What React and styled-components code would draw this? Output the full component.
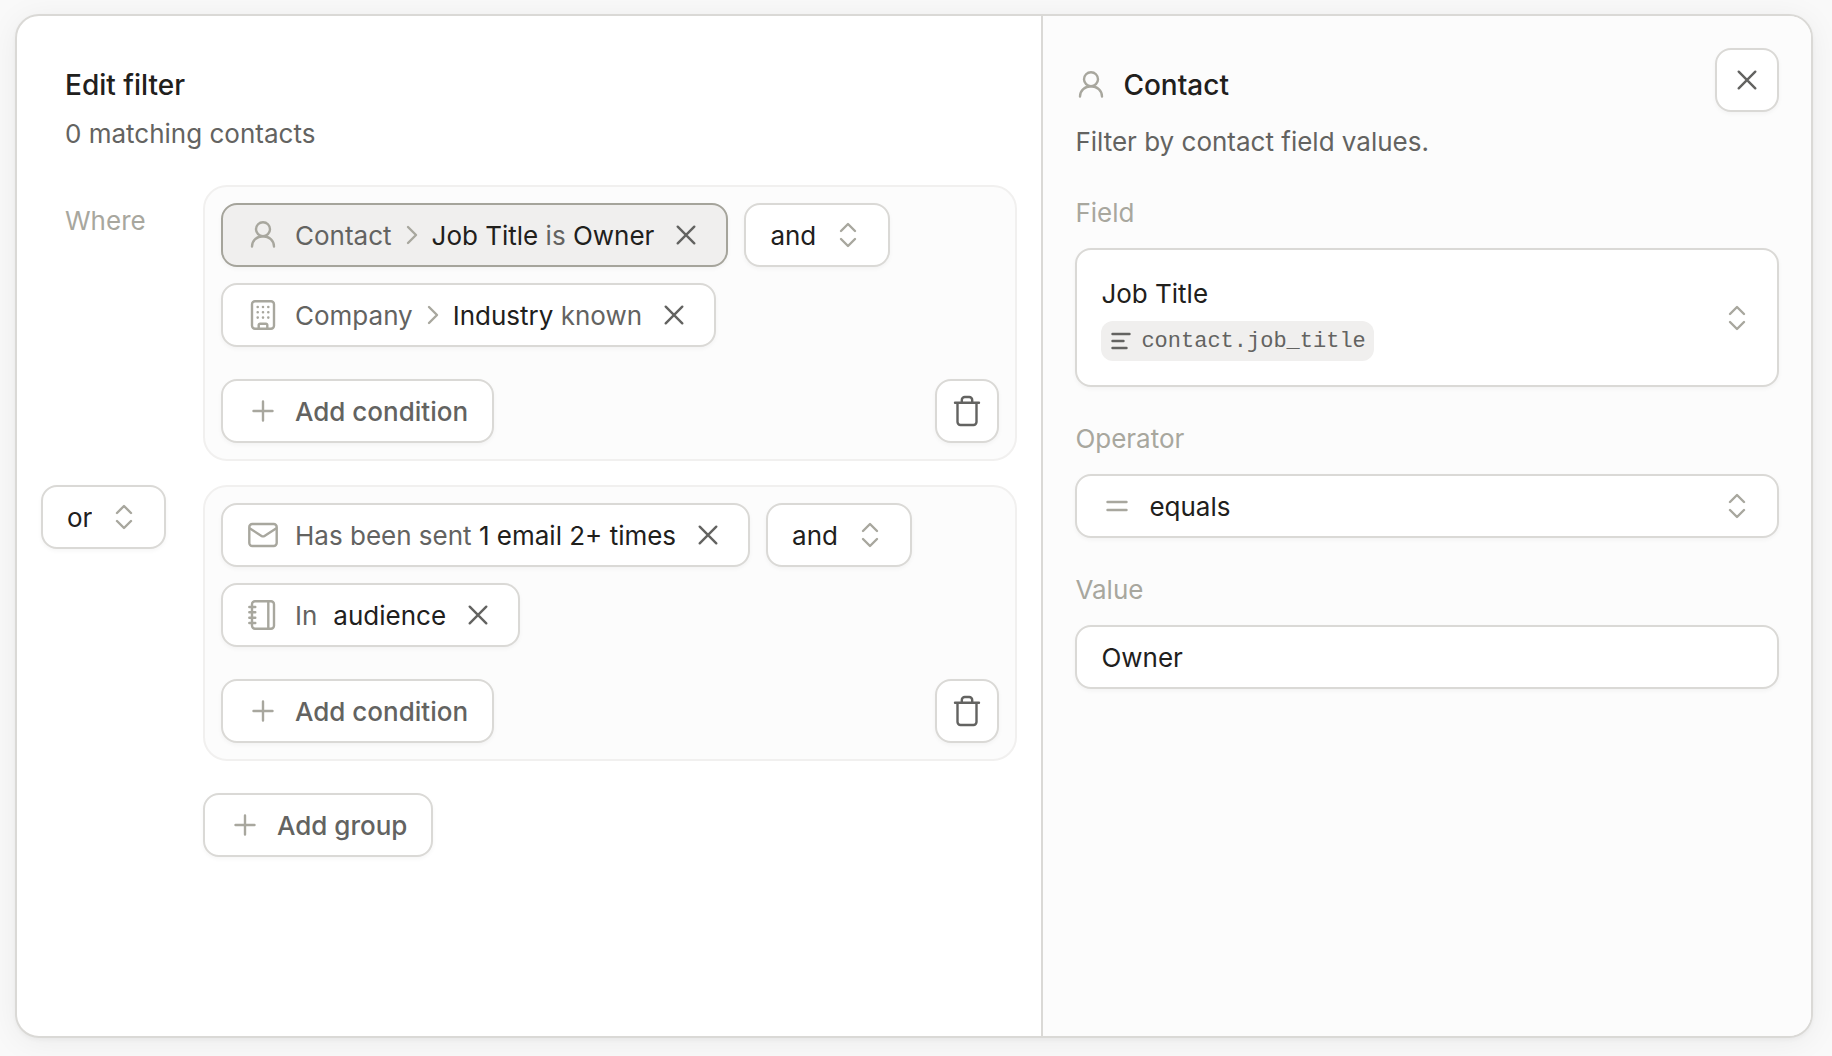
import { useState } from "react";
import styled, { createGlobalStyle } from "styled-components";

const GlobalStyle = createGlobalStyle`
  *, *::before, *::after {
    box-sizing: border-box;
  }

  body {
    margin: 0;
    background: #f9f9f9;
    color: #21201c;
    font-family: Inter, "Liberation Sans", sans-serif;
    font-size: 26px;
    line-height: 39px;
    -webkit-font-smoothing: antialiased;
  }

  button, input, select {
    margin: 0;
    font: inherit;
    color: inherit;
  }
`;

const Page = styled.main`
  display: flex;
  min-height: 100vh;
  padding: 14px 19px 18px 15px;
`;

const Dialog = styled.div`
  flex: 1;
  display: grid;
  grid-template-columns: 1fr 42.9%;
  border: 2px solid #dad9d6;
  border-radius: 24px;
  background: #ffffff;
  overflow: hidden;
  box-shadow: 0 2px 4px rgba(0, 0, 0, 0.04), 0 4px 32px rgba(0, 0, 0, 0.06);
`;

const FilterPane = styled.section`
  padding: 48px 24px 24px;
`;

const FilterHeader = styled.header`
  display: flex;
  flex-direction: column;
  gap: 8px;
  padding: 0 24px;
  margin-bottom: 32px;
`;

const Title = styled.h2`
  margin: 0;
  font-size: 28px;
  line-height: 42px;
  font-weight: 500;
`;

const Muted = styled.p`
  margin: 0;
  color: #636361;
`;

const Groups = styled.div`
  display: grid;
  grid-template-columns: 138px 1fr;
  align-items: start;
  gap: 24px;
`;

const Where = styled.span`
  padding: 16px 24px;
  color: #a8a79e;
`;

const Group = styled.div`
  display: flex;
  flex-direction: column;
  gap: 32px;
  padding: 16px;
  border: 2px solid #f1f0ef;
  border-radius: 24px;
  background: #fcfcfc;
`;

const Conditions = styled.div`
  display: flex;
  flex-direction: column;
  gap: 16px;
`;

const ConditionRow = styled.div`
  display: flex;
  flex-wrap: wrap;
  gap: 16px;
`;

const GroupFooter = styled.div`
  display: flex;
  justify-content: space-between;
`;

const Chip = styled.div`
  display: flex;
  align-items: center;
  gap: 16px;
  height: 64px;
  padding: 0 24px;
  border: 2px solid ${({ $active }) => ($active ? "#a5a49b" : "#dad9d6")};
  border-radius: 16px;
  background: ${({ $active }) => ($active ? "#f0efee" : "#ffffff")};
  box-shadow: 0 2px 4px rgba(0, 0, 0, 0.04);
  white-space: nowrap;
`;

const ChipText = styled.span`
  display: flex;
  align-items: center;
  gap: 8px;
  color: #636361;

  strong {
    color: #21201c;
    font-weight: 400;
  }
`;

const ChipRemove = styled.button`
  display: flex;
  padding: 0;
  border: 0;
  background: none;
  color: #636361;
  cursor: pointer;
`;

const Button = styled.button`
  display: inline-flex;
  align-items: center;
  gap: 16px;
  height: 64px;
  padding: 0 24px;
  border: 2px solid #dad9d6;
  border-radius: 16px;
  background: #ffffff;
  box-shadow: 0 2px 4px rgba(0, 0, 0, 0.04);
  color: #636361;
  font-weight: 500;
  white-space: nowrap;
  cursor: pointer;
`;

const IconButton = styled(Button)`
  flex: none;
  justify-content: center;
  width: 64px;
  padding: 0;
`;

const AddGroup = styled.div`
  grid-column: 2;
  margin-top: 8px;
`;

/* The select fills the box, its icons share the same grid cell. */
const SelectBox = styled.span`
  display: ${({ $block }) => ($block ? "grid" : "inline-grid")};
  align-items: center;
  justify-self: start;

  & > * {
    grid-area: 1 / 1;
  }

  & > svg {
    margin: 0 26px;
    pointer-events: none;
  }

  & > svg:last-child {
    justify-self: end;
  }
`;

const SelectInput = styled.select`
  appearance: none;
  field-sizing: content;
  height: 64px;
  padding: 0 72px 0 ${({ $leading }) => ($leading ? 72 : 24)}px;
  border: 2px solid #dad9d6;
  border-radius: 16px;
  background: #ffffff;
  box-shadow: 0 2px 4px rgba(0, 0, 0, 0.04);
  cursor: pointer;
`;

const DetailPane = styled.aside`
  display: flex;
  flex-direction: column;
  gap: 32px;
  padding: 32px;
  border-left: 2px solid #dad9d6;
  background: #fcfcfc;
`;

const DetailHeader = styled.header`
  display: flex;
  justify-content: space-between;
  align-items: flex-start;
`;

const DetailHeading = styled.div`
  display: flex;
  flex-direction: column;
  gap: 16px;
  padding-top: 16px;
`;

const DetailTitle = styled.div`
  display: flex;
  align-items: center;
  gap: 16px;
`;

const Field = styled.div`
  display: flex;
  flex-direction: column;
  gap: 16px;

  ${SelectBox} {
    justify-self: stretch;
  }
`;

const Label = styled.label`
  color: #a8a79e;
`;

const FieldButton = styled.button`
  display: flex;
  align-items: center;
  justify-content: space-between;
  padding: 24px;
  border: 2px solid #dad9d6;
  border-radius: 16px;
  background: #ffffff;
  box-shadow: 0 2px 4px rgba(0, 0, 0, 0.04);
  text-align: left;
  cursor: pointer;
`;

const FieldValue = styled.span`
  display: flex;
  flex-direction: column;
  align-items: flex-start;
  gap: 8px;
`;

const Code = styled.code`
  display: flex;
  align-items: center;
  gap: 8px;
  height: 40px;
  padding: 0 8px;
  border-radius: 12px;
  background: #f0efee;
  color: #636361;
  font-family: "Liberation Mono", monospace;
  font-size: 22px;
`;

const TextInput = styled.input`
  width: 100%;
  height: 64px;
  padding: 0 24px;
  border: 2px solid #dad9d6;
  border-radius: 16px;
  background: #ffffff;
  box-shadow: 0 2px 4px rgba(0, 0, 0, 0.04);
`;

const Svg = styled.svg`
  flex: none;
  fill: none;
  stroke: ${({ $tone }) => ($tone === "dark" ? "#636361" : "#a8a79e")};
  stroke-width: 2.4;
  stroke-linecap: round;
  stroke-linejoin: round;
`;

function Icon({ size = 32, tone, children }) {
  return (
    <Svg width={size} height={size} viewBox={`0 0 ${size} ${size}`} $tone={tone} aria-hidden="true">
      {children}
    </Svg>
  );
}

const UserIcon = () => (
  <Icon>
    <circle cx="16" cy="10.2" r="7" />
    <path d="M5 27.5C5 21.6 9.900 17.200 16 17.200s11 4.400 11 10.300" />
  </Icon>
);

const BuildingIcon = () => (
  <Icon>
    <rect x="5" y="2.300" width="22" height="27.400" rx="3" />
    <path d="M11.700 29.700V26a1.300 1.300 0 0 1 1.300-1.300h6a1.300 1.300 0 0 1 1.300 1.300v3.700" />
    <path strokeWidth="2.600" d="M10.700 8h0M16 8h0M21.300 8h0M10.700 13.300h0M16 13.300h0M21.300 13.300h0M10.700 18.600h0M16 18.600h0M21.300 18.600h0" />
  </Icon>
);

const MailIcon = () => (
  <Icon>
    <rect x="2.300" y="5" width="27.400" height="22" rx="3" />
    <path d="M3 9.500l11.500 7.400a2.800 2.800 0 0 0 3 0L29 9.500" />
  </Icon>
);

const NotebookIcon = () => (
  <Icon>
    <rect x="5" y="2.300" width="22" height="27.400" rx="3" />
    <path d="M21.300 2.300v27.400M2.300 8h6M2.300 13.300h6M2.300 18.700h6M2.300 24h6" />
  </Icon>
);

const ChevronIcon = () => (
  <Icon size={24}>
    <path d="M8 4l8 8-8 8" />
  </Icon>
);

const UpDownIcon = () => (
  <Icon>
    <path d="M9 12l7-7 7 7M9 20l7 7 7-7" />
  </Icon>
);

const CloseIcon = () => (
  <Icon tone="dark">
    <path d="M7.700 7.700l16.600 16.600M24.300 7.700L7.700 24.300" />
  </Icon>
);

const PlusIcon = () => (
  <Icon>
    <path d="M16 6.500v19M6.500 16h19" />
  </Icon>
);

const TrashIcon = () => (
  <Icon tone="dark">
    <path d="M4 7.700h24M6.500 7.700V27a3 3 0 0 0 3 3h13a3 3 0 0 0 3-3V7.700M10.800 7.500V5a3 3 0 0 1 3-3h4.400a3 3 0 0 1 3 3v2.500" />
  </Icon>
);

const EqualsIcon = () => (
  <Icon>
    <path d="M6.500 12h19M6.500 20h19" />
  </Icon>
);

const TextIcon = () => (
  <Icon size={24} tone="dark">
    <path d="M3.500 5h17M3.500 12h11M3.500 19h14" />
  </Icon>
);

function Condition({ icon, active, name, children }) {
  return (
    <Chip $active={active}>
      {icon}
      {children}
      <ChipRemove type="button" aria-label={`Remove ${name}`}>
        <CloseIcon />
      </ChipRemove>
    </Chip>
  );
}

function Joiner({ initial, label }) {
  const [value, setValue] = useState(initial);
  return (
    <SelectBox>
      <SelectInput aria-label={label} value={value} onChange={(e) => setValue(e.target.value)}>
        <option>and</option>
        <option>or</option>
      </SelectInput>
      <UpDownIcon />
    </SelectBox>
  );
}

function ConditionGroup({ children }) {
  return (
    <Group>
      <Conditions>{children}</Conditions>
      <GroupFooter>
        <Button type="button">
          <PlusIcon />
          Add condition
        </Button>
        <IconButton type="button" aria-label="Delete group">
          <TrashIcon />
        </IconButton>
      </GroupFooter>
    </Group>
  );
}

export default function App() {
  const [operator, setOperator] = useState("equals");
  const [value, setValue] = useState("Owner");

  return (
    <>
      <GlobalStyle />
      <Page>
        <Dialog role="dialog" aria-label="Edit filter">
          <FilterPane>
            <FilterHeader>
              <Title>Edit filter</Title>
              <Muted>0 matching contacts</Muted>
            </FilterHeader>
            <Groups>
              <Where>Where</Where>
              <ConditionGroup>
                <ConditionRow>
                  <Condition icon={<UserIcon />} name="job title" active>
                    <ChipText>
                      Contact
                      <ChevronIcon />
                      <span>
                        <strong>Job Title</strong> is <strong>Owner</strong>
                      </span>
                    </ChipText>
                  </Condition>
                  <Joiner initial="and" label="Match conditions" />
                </ConditionRow>
                <ConditionRow>
                  <Condition icon={<BuildingIcon />} name="industry">
                    <ChipText>
                      Company
                      <ChevronIcon />
                      <span>
                        <strong>Industry</strong> known
                      </span>
                    </ChipText>
                  </Condition>
                </ConditionRow>
              </ConditionGroup>

              <Joiner initial="or" label="Match groups" />
              <ConditionGroup>
                <ConditionRow>
                  <Condition icon={<MailIcon />} name="email">
                    <ChipText>
                      <span>
                        Has been sent <strong>1 email 2+ times</strong>
                      </span>
                    </ChipText>
                  </Condition>
                  <Joiner initial="and" label="Match conditions" />
                </ConditionRow>
                <ConditionRow>
                  <Condition icon={<NotebookIcon />} name="audience">
                    <ChipText>In</ChipText>
                    <ChipText>
                      <strong>audience</strong>
                    </ChipText>
                  </Condition>
                </ConditionRow>
              </ConditionGroup>

              <AddGroup>
                <Button type="button">
                  <PlusIcon />
                  Add group
                </Button>
              </AddGroup>
            </Groups>
          </FilterPane>

          <DetailPane>
            <DetailHeader>
              <DetailHeading>
                <DetailTitle>
                  <UserIcon />
                  <Title>Contact</Title>
                </DetailTitle>
                <Muted>Filter by contact field values.</Muted>
              </DetailHeading>
              <IconButton type="button" aria-label="Close">
                <CloseIcon />
              </IconButton>
            </DetailHeader>

            <Field>
              <Label htmlFor="field">Field</Label>
              <FieldButton id="field" type="button" aria-haspopup="listbox">
                <FieldValue>
                  Job Title
                  <Code>
                    <TextIcon />
                    contact.job_title
                  </Code>
                </FieldValue>
                <UpDownIcon />
              </FieldButton>
            </Field>

            <Field>
              <Label htmlFor="operator">Operator</Label>
              <SelectBox $block>
                <SelectInput
                  id="operator"
                  $leading
                  value={operator}
                  onChange={(e) => setOperator(e.target.value)}
                >
                  <option>equals</option>
                  <option>does not equal</option>
                </SelectInput>
                <EqualsIcon />
                <UpDownIcon />
              </SelectBox>
            </Field>

            <Field>
              <Label htmlFor="value">Value</Label>
              <TextInput id="value" value={value} onChange={(e) => setValue(e.target.value)} />
            </Field>
          </DetailPane>
        </Dialog>
      </Page>
    </>
  );
}
